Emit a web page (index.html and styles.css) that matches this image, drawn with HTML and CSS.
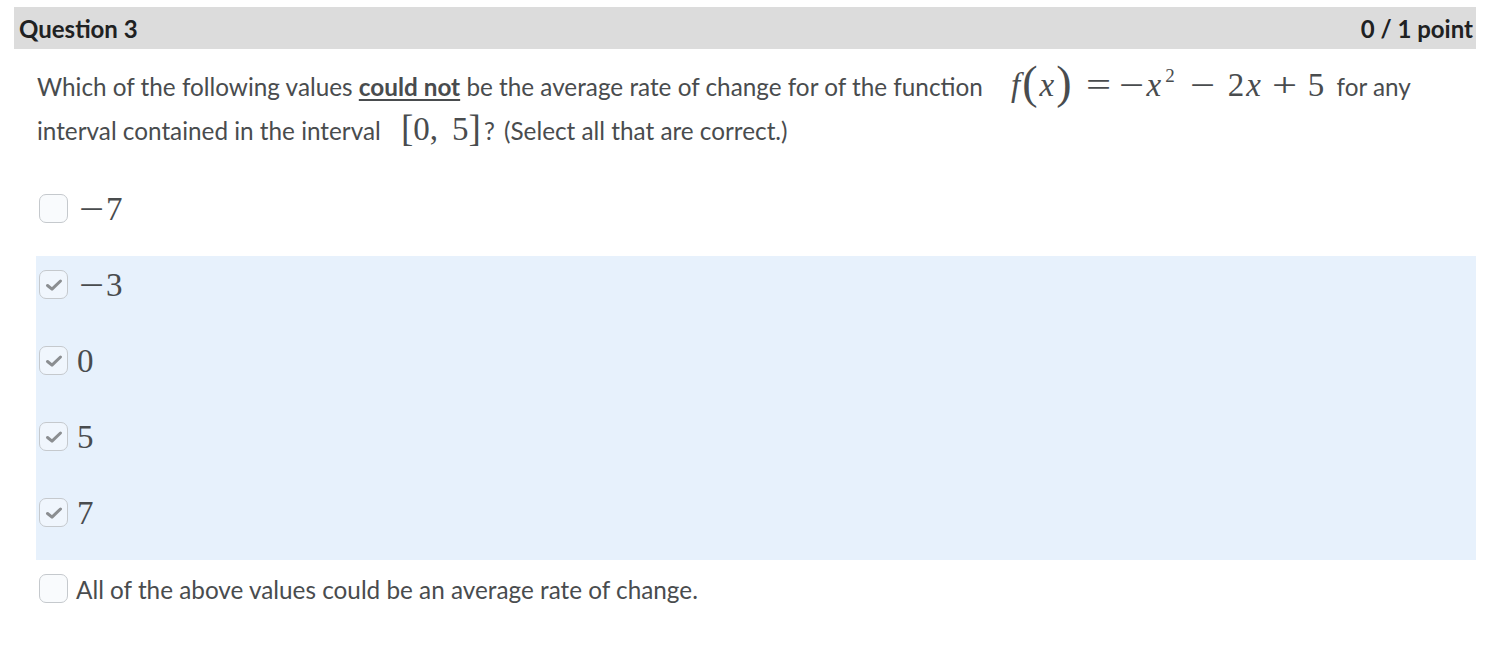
FILE: index.html
```html
<!DOCTYPE html>
<html>
<head>
<meta charset="utf-8">
<link rel="stylesheet" href="styles.css">
</head>
<body>
<div class="question">
  <div class="q-header">
    <span class="q-title">Question 3</span>
    <span class="q-points">0 / 1 point</span>
  </div>
  <div class="q-body">
    <p class="q-text">Which of the following values <u class="strong">could not</u> be the average rate of change for of the function <span class="math fx"><i class="f">f</i><span class="delim">(</span><i class="x">x</i><span class="delim">)</span><span class="rel">=</span><span class="neg">−</span><i class="x">x</i><sup>2</sup><span class="bin b1">−</span>2<i class="x">x</i><span class="bin b2">+</span>5</span> for any interval contained in the interval <span class="math iv"><span class="delim sq">[</span>0,<span class="sp"></span>5<span class="delim sq">]</span></span><span class="q">?</span> (Select all that are correct.)</p>
    <div class="options">
      <div class="opt">
        <span class="box"></span>
        <span class="math val"><span class="neg">−</span>7</span>
      </div>
      <div class="selected">
        <div class="opt">
          <span class="box checked"><svg viewBox="0 0 20 20" width="20" height="20"><path d="M3.5 10.5 L8 14.2 L16.5 6" fill="none" stroke="#8b8e91" stroke-width="3" stroke-linecap="round" stroke-linejoin="round"/></svg></span>
          <span class="math val"><span class="neg">−</span>3</span>
        </div>
        <div class="opt">
          <span class="box checked"><svg viewBox="0 0 20 20" width="20" height="20"><path d="M3.5 10.5 L8 14.2 L16.5 6" fill="none" stroke="#8b8e91" stroke-width="3" stroke-linecap="round" stroke-linejoin="round"/></svg></span>
          <span class="math val">0</span>
        </div>
        <div class="opt">
          <span class="box checked"><svg viewBox="0 0 20 20" width="20" height="20"><path d="M3.5 10.5 L8 14.2 L16.5 6" fill="none" stroke="#8b8e91" stroke-width="3" stroke-linecap="round" stroke-linejoin="round"/></svg></span>
          <span class="math val">5</span>
        </div>
        <div class="opt">
          <span class="box checked"><svg viewBox="0 0 20 20" width="20" height="20"><path d="M3.5 10.5 L8 14.2 L16.5 6" fill="none" stroke="#8b8e91" stroke-width="3" stroke-linecap="round" stroke-linejoin="round"/></svg></span>
          <span class="math val">7</span>
        </div>
      </div>
      <div class="opt">
        <span class="box"></span>
        <span class="label">All of the above values could be an average rate of change.</span>
      </div>
    </div>
  </div>
</div>
</body>
</html>
```

FILE: styles.css
```css
html, body {
  margin: 0;
  padding: 0;
  background: #ffffff;
}
body {
  font-family: Lato, "Liberation Sans", sans-serif;
  color: #494c4e;
}
.question {
  padding: 7px 12px 0 14px;
}
.q-header {
  display: flex;
  justify-content: space-between;
  align-items: center;
  height: 42px;
  background: #dcdcdc;
  padding: 0 3px 0 5px;
  font-size: 24px;
  font-weight: 700;
  color: #202122;
}
.q-body {
  padding-left: 22px;
}
.q-text {
  margin: 15px 0 0 0;
  font-size: 24.3px;
  line-height: 43px;
  color: #494c4e;
  padding-left: 1px;
}
.strong {
  font-weight: 700;
  text-decoration-thickness: 2px;
  text-underline-offset: 3px;
}
.math {
  font-family: "Liberation Serif", "DejaVu Serif", serif;
  font-size: 33px;
  color: #494c4e;
  white-space: nowrap;
}
.math i {
  font-style: italic;
}
.math i.f {
  margin-right: 2px;
}
.math i.x {
  margin: 0 2px;
}
.math sup {
  font-size: 19px;
  line-height: 0;
  vertical-align: 14px;
  margin-left: 2px;
}
.neg {
  display: inline-block;
  width: 23px;
  text-align: center;
  transform: scaleX(1.35);
  margin-right: 2px;
}
.fx {
  margin-left: 22px;
  margin-right: 6px;
}
.delim {
  font-size: 46px;
  line-height: 0;
  vertical-align: -2px;
  display: inline-block;
}
.delim.sq {
  font-size: 37px;
  vertical-align: -1px;
}
.rel {
  display: inline-block;
  width: 23px;
  text-align: center;
  margin: 0 10px 0 15px;
  transform: scaleX(1.35);
}
.bin {
  display: inline-block;
  width: 23px;
  text-align: center;
  transform: scaleX(1.35);
}
.b1 {
  margin: 0 14px 0 16px;
}
.b2 {
  margin: 0 12px 0 10px;
}
.iv {
  margin-left: 14px;
  margin-right: 3px;
}
.sp {
  display: inline-block;
  width: 14px;
}
.q {
  margin-right: 3px;
}
.options {
  margin-top: 28px;
}
.selected {
  background: #e7f1fc;
}
.opt {
  display: flex;
  align-items: flex-start;
  height: 76px;
  box-sizing: border-box;
  padding: 14px 0 0 3px;
}
.box {
  width: 29px;
  height: 29px;
  box-sizing: border-box;
  border: 1px solid #c5c9cd;
  border-radius: 7px;
  background: #f9fbfd;
  display: flex;
  align-items: center;
  justify-content: center;
  flex: none;
}
.box.checked {
  background: #f0f6fd;
}
.val {
  margin-left: 9px;
  line-height: 30px;
  font-size: 33px;
}
.val .neg {
  margin-left: 3px;
  margin-right: 3px;
}
.label {
  margin-left: 8px;
  font-size: 24.3px;
  line-height: 30px;
  color: #494c4e;
  position: relative;
  top: 1px;
}
```
